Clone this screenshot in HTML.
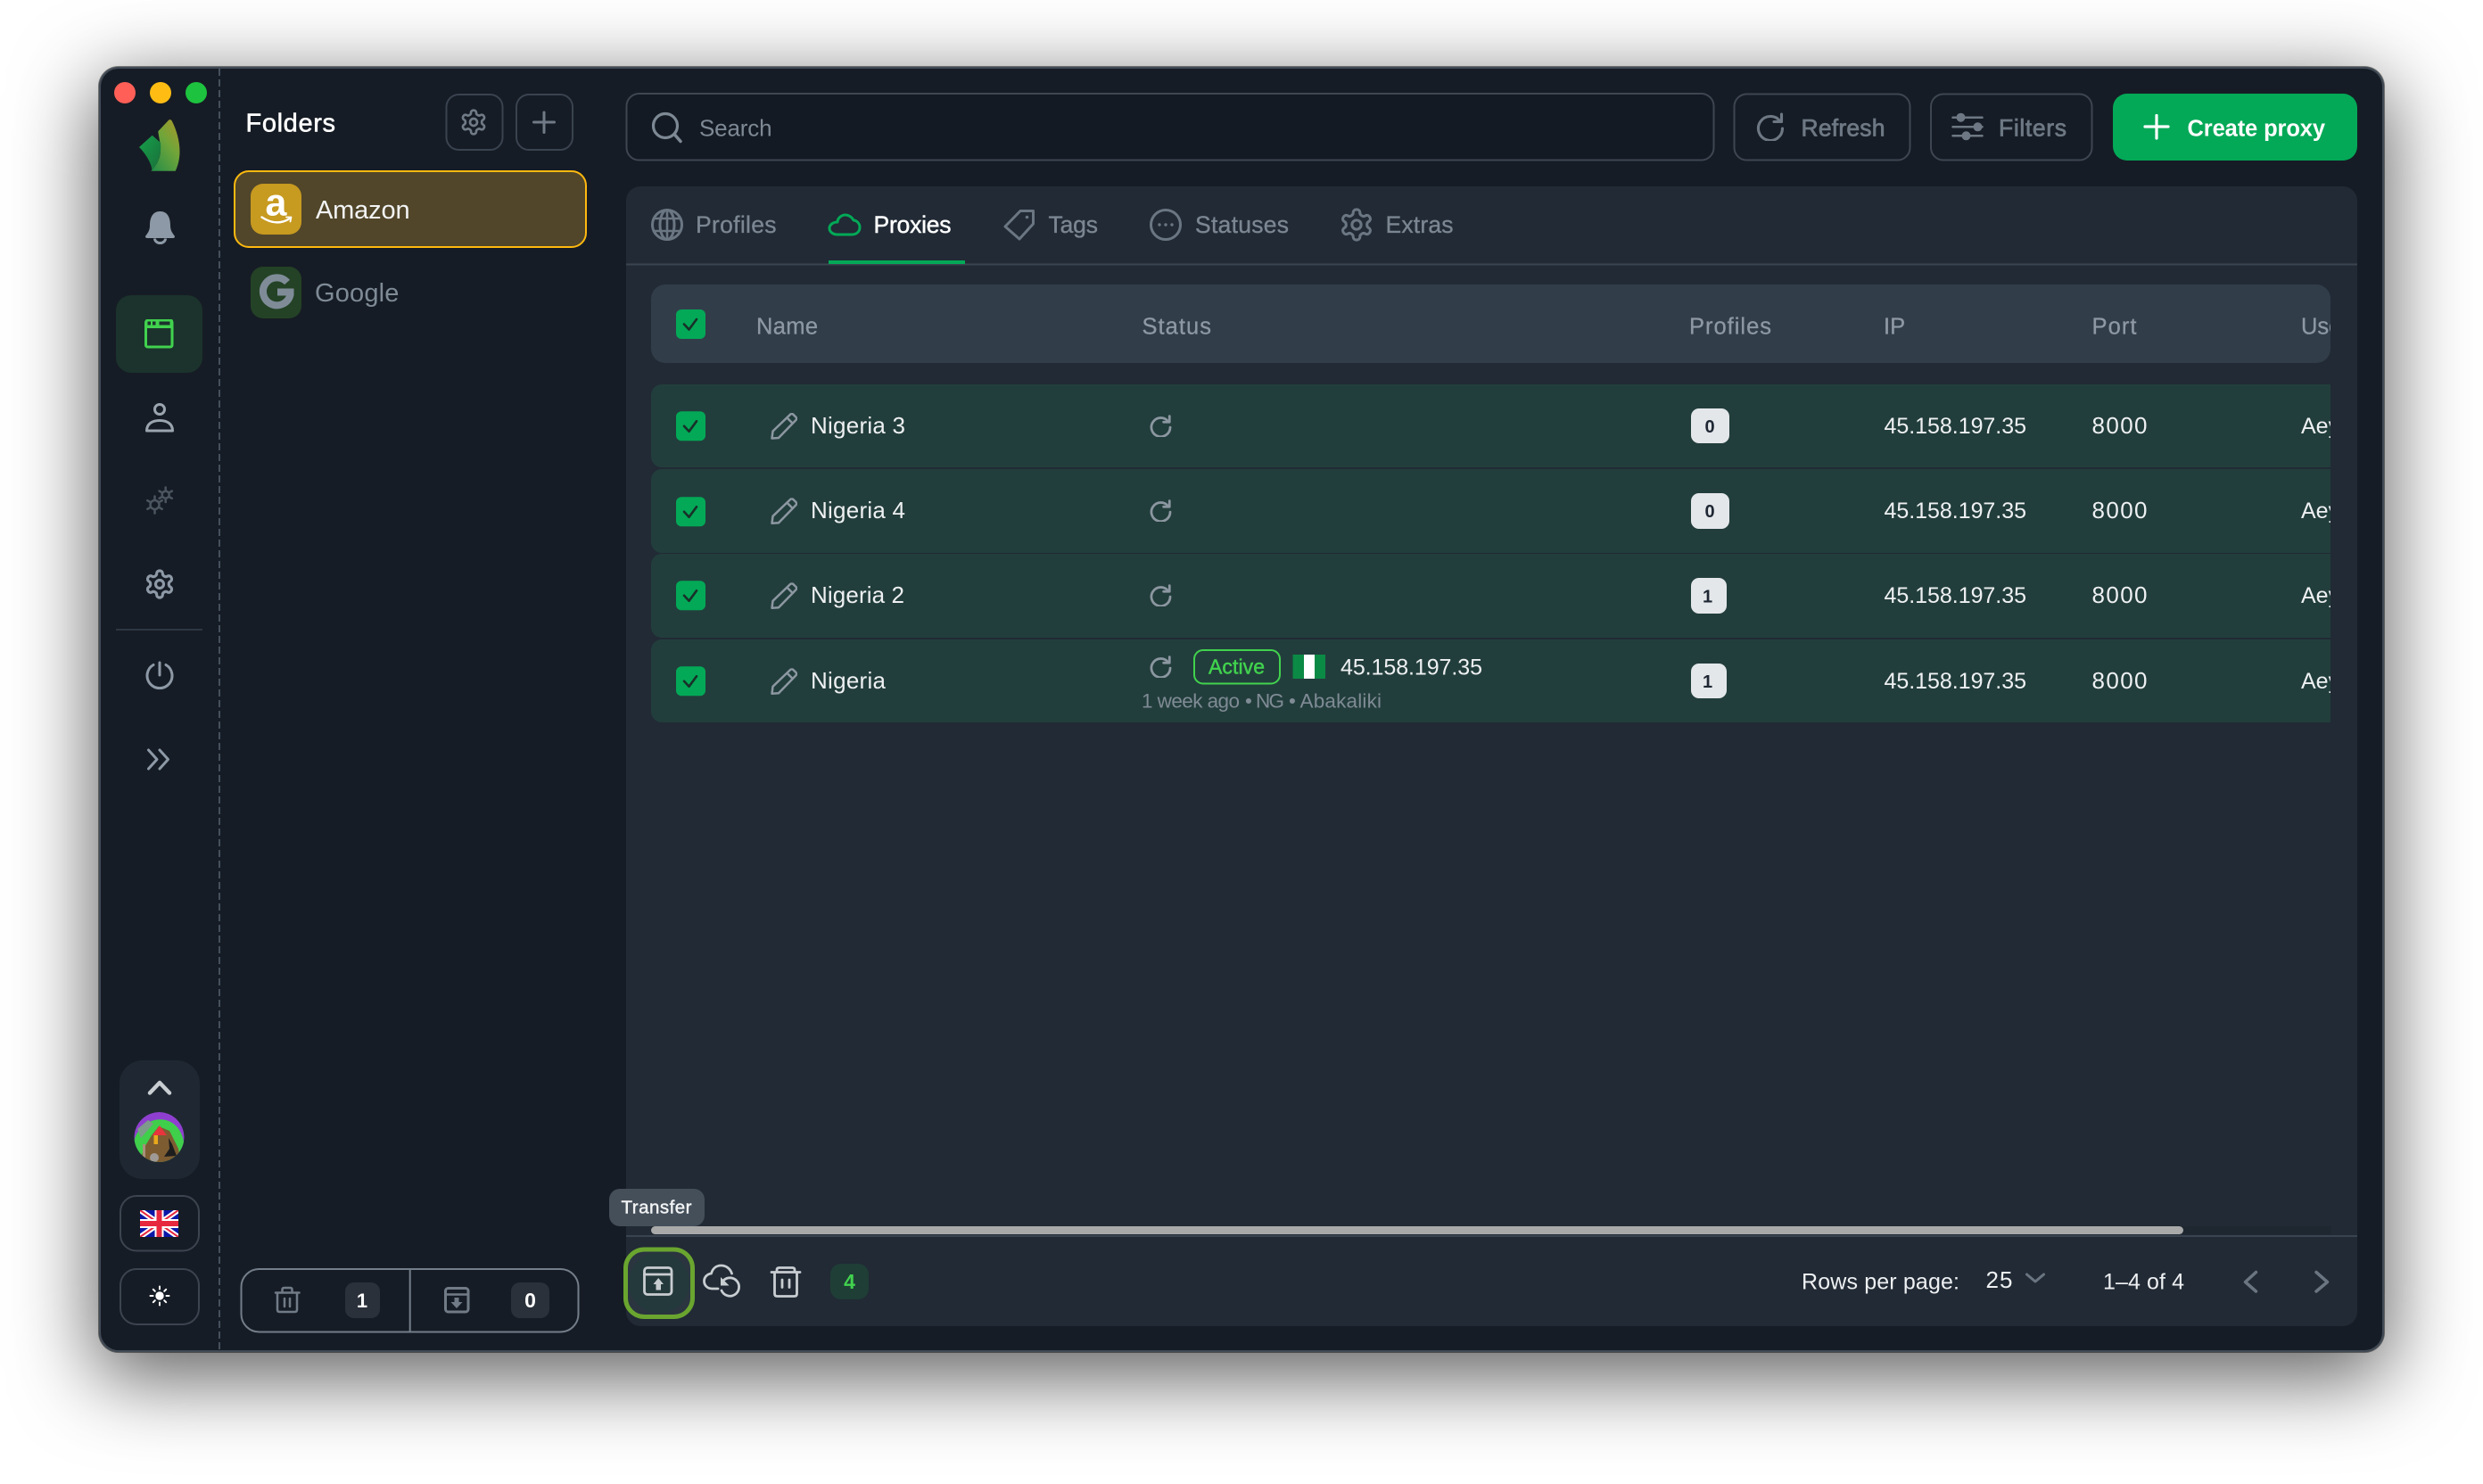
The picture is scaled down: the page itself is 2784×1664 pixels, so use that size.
<!DOCTYPE html>
<html lang="en">
<head>
<meta charset="utf-8">
<title>Proxies</title>
<style>
html,body{margin:0;padding:0;background:#fff;width:2784px;height:1664px;overflow:hidden}
#win{position:absolute;left:111px;top:75px;width:2562px;height:1441px;border-radius:22px;background:#161c25;box-shadow:inset 0 0 0 2px #414b56,0 0 0 1px rgba(0,0,0,.45),0 24px 90px 6px rgba(0,0,0,.62)}
svg{position:absolute;left:0;top:0}
text{font-family:"Liberation Sans",sans-serif;white-space:pre}
.w{fill:#eef0f2}
.m{stroke-width:.45;stroke:currentColor}
.h{fill:#8d98a4;stroke:#8d98a4;stroke-width:.3}
.tab{fill:#7b8692;stroke:#7b8692;stroke-width:.35}
.ic{fill:none;stroke-linecap:round;stroke-linejoin:round}
</style>
</head>
<body>
<div id="win"></div>
<svg width="2784" height="1664" viewBox="0 0 2784 1664" xmlns="http://www.w3.org/2000/svg">
<defs>
<symbol id="gear" viewBox="0 0 24 24"><path d="M12.22 2h-.44a2 2 0 0 0-2 2v.18a2 2 0 0 1-1 1.73l-.43.25a2 2 0 0 1-2 0l-.15-.08a2 2 0 0 0-2.73.73l-.22.38a2 2 0 0 0 .73 2.73l.15.1a2 2 0 0 1 1 1.72v.51a2 2 0 0 1-1 1.74l-.15.09a2 2 0 0 0-.73 2.73l.22.38a2 2 0 0 0 2.73.73l.15-.08a2 2 0 0 1 2 0l.43.25a2 2 0 0 1 1 1.73V20a2 2 0 0 0 2 2h.44a2 2 0 0 0 2-2v-.18a2 2 0 0 1 1-1.73l.43-.25a2 2 0 0 1 2 0l.15.08a2 2 0 0 0 2.73-.73l.22-.39a2 2 0 0 0-.73-2.73l-.15-.08a2 2 0 0 1-1-1.74v-.5a2 2 0 0 1 1-1.74l.15-.09a2 2 0 0 0 .73-2.73l-.22-.38a2 2 0 0 0-2.73-.73l-.15.08a2 2 0 0 1-2 0l-.43-.25a2 2 0 0 1-1-1.73V4a2 2 0 0 0-2-2z"/><circle cx="12" cy="12" r="3"/></symbol>
<symbol id="rf" viewBox="0 0 32 32"><path d="M26.5 9.5A13.5 13.5 0 1 0 29.500 18"/><path d="M28.500 2V10.500H20"/></symbol>
<symbol id="pen" viewBox="0 0 30 30"><path d="M1.500 28.500l1-8L22 1.800a2.500 2.500 0 0 1 3.500 0l2.800 2.800a2.500 2.500 0 0 1 0 3.500L9 28z"/><path d="M18.500 5.500l6 6"/></symbol>
<linearGradient id="lg1" x1="0.9" y1="0" x2="0.15" y2="1"><stop offset="0" stop-color="#a5982a"/><stop offset=".45" stop-color="#6fa53a"/><stop offset="1" stop-color="#2a8f47"/></linearGradient>
<linearGradient id="lg2" x1="0" y1="0" x2="1" y2="1"><stop offset="0" stop-color="#15a04a"/><stop offset="1" stop-color="#1a6f3a"/></linearGradient>
<clipPath id="tb"><rect x="702" y="300" width="1911" height="520"/></clipPath>
<clipPath id="av"><circle cx="178.500" cy="1275" r="28"/></clipPath>
<clipPath id="ukc"><rect x="157" y="1357" width="43" height="30"/></clipPath>
</defs>

<!-- window controls -->
<circle cx="140" cy="104" r="12" fill="#ff5f57"/>
<circle cx="180" cy="104" r="12" fill="#ffbd14"/>
<circle cx="220" cy="104" r="12" fill="#1dc23f"/>
<line x1="246" y1="77" x2="246" y2="1514" stroke="#44505c" stroke-width="2" stroke-dasharray="8 4"/>

<!-- logo -->
<path d="M177.300 147.300L189.300 134.500Q191.500 133.500 192.700 135.500C198 146 201.500 158 201.500 170C201.500 178 199.500 186 196.700 191.700H169.300C175 186 180 178 180 168C180 160 178 154 177.300 147.300Z" fill="url(#lg1)"/>
<path d="M156 165L170.700 151.700L180 160C181 170 179 182 170.500 191C170 183 163 172 156 165Z" fill="url(#lg2)"/>

<!-- sidebar -->
<path d="M179.500 237C170 237 168 246 168 253C168 259 165 262 163 265Q163 267 165 267H194Q196 267 196 265C194 262 191 259 191 253C191 246 189 237 179.500 237Z" fill="#8d99a6"/>
<path d="M173.500 267.500a6 5 0 0 0 12 0" fill="none" stroke="#8d99a6" stroke-width="3"/>

<rect x="130" y="331" width="97" height="87" rx="17" fill="#1b332c"/>
<rect x="163.500" y="359.500" width="29.500" height="29.500" rx="2" fill="none" stroke="#41d24e" stroke-width="3"/>
<rect x="163" y="358" width="31" height="10" rx="2" fill="#41d24e"/>
<rect x="165.500" y="360.500" width="3.500" height="4" fill="#1b332c"/><rect x="171" y="360.500" width="3.500" height="4" fill="#1b332c"/><rect x="178.500" y="360.500" width="12" height="4" fill="#1b332c"/>

<g class="ic" stroke="#9aa5b0" stroke-width="3">
<circle cx="179" cy="459" r="5.500"/>
<path d="M164.500 483C164.500 475 171 471.500 179 471.500C187 471.500 193.500 475 193.500 483Z"/>
</g>
<g fill="none" stroke="#4b5560" stroke-linecap="round">
<circle cx="185.700" cy="554.700" r="4" stroke-width="2.500"/>
<path d="M185.700 546.500v2.500M185.700 560.500v2.500M178.600 550.600l2.200 1.200M190.600 557.600l2.200 1.200M178.600 558.800l2.200-1.200M190.600 551.800l2.200-1.200" stroke-width="2.500"/>
<circle cx="173.500" cy="566" r="5" stroke-width="2.500"/>
<path d="M173.500 556.500v3M173.500 572.500v3M165.300 561.200l2.600 1.500M179.100 569.300l2.600 1.500M165.300 570.800l2.600-1.500M179.100 562.700l2.600-1.500" stroke-width="2.500"/>
</g>
<g fill="none" stroke="#8d99a6" stroke-width="2.100" stroke-linejoin="round"><use href="#gear" x="161" y="637" width="36" height="36"/></g>
<rect x="130" y="705" width="97" height="2" fill="#2d3743"/>
<g class="ic" stroke="#8d99a6" stroke-width="3">
<path d="M172 745.500A14 14 0 1 0 186 745.500"/><path d="M179 743V757"/>
<path d="M166.500 841L176 851.500L166.500 862M179 841L188.500 851.500L179 862"/>
</g>

<rect x="134" y="1189" width="90" height="133" rx="26" fill="#1f2832"/>
<path class="ic" d="M168 1225.500L179 1214L190 1225.500" stroke="#c9ced3" stroke-width="4.500"/>
<g clip-path="url(#av)">
<circle cx="178.500" cy="1275" r="28" fill="#8f3fd0"/>
<path d="M150 1282C152 1264 170 1252 186 1256C198 1259 206 1270 207 1288L195 1304H160Z" fill="#3fcf4b"/>
<path d="M154 1266L166 1256L172 1260L158 1276Z" fill="#7d9a8a"/>
<path d="M157 1304L161 1288L170 1273L178 1263L190 1268L200 1288L203 1304Z" fill="#7d5c32"/>
<path d="M179 1262L187 1273H171Z" fill="#e8343c"/>
<rect x="172.500" y="1273" width="4.500" height="10" fill="#e9a91c"/>
<path d="M189 1276L193 1283L198 1296L184 1297L190 1288Z" fill="#1d1d1d"/>
<circle cx="173" cy="1298" r="5" fill="#a09a96"/>
<rect x="160" y="1283" width="3" height="15" fill="#a8917a"/>
</g>

<rect x="135" y="1341" width="88" height="61.500" rx="18" fill="none" stroke="#3c4450" stroke-width="2"/>
<g clip-path="url(#ukc)">
<rect x="157" y="1357" width="43" height="30" fill="#0a17a7"/>
<path d="M157 1357L200 1387M200 1357L157 1387" stroke="#fff" stroke-width="6"/>
<path d="M157 1357L200 1387M200 1357L157 1387" stroke="#e6273e" stroke-width="2"/>
<path d="M178.500 1357V1387M157 1372H200" stroke="#fff" stroke-width="10"/>
<path d="M178.500 1357V1387M157 1372H200" stroke="#e6273e" stroke-width="6"/>
</g>
<rect x="135" y="1423" width="88" height="62" rx="18" fill="none" stroke="#3c4450" stroke-width="2"/>
<circle cx="179" cy="1453" r="4.700" fill="#fff"/>
<path d="M179 1442.500v3M179 1460.500v3M168.500 1453h3M186.500 1453h3M171.800 1445.800l2 2M184.200 1458.200l2 2M186.200 1445.800l-2 2M173.800 1458.200l-2 2" stroke="#fff" stroke-width="2" stroke-linecap="round"/>

<!-- folders -->
<text x="275.500" y="147.500" font-size="29" fill="#fff" stroke="#fff" stroke-width=".55" textLength="100.500">Folders</text>
<rect x="500.500" y="106" width="63" height="62" rx="14" fill="none" stroke="#3a4350" stroke-width="2"/>
<g fill="none" stroke="#707b87" stroke-width="2" stroke-linejoin="round"><use href="#gear" x="515" y="121" width="32" height="32"/></g>
<rect x="579" y="106" width="63" height="62" rx="14" fill="none" stroke="#3a4350" stroke-width="2"/>
<path class="ic" d="M610 126V148.500M598.500 137H621.500" stroke="#707b87" stroke-width="3"/>

<rect x="263" y="192" width="394" height="85" rx="16" fill="#51462a" stroke="#ffb90f" stroke-width="2"/>
<rect x="281" y="206" width="57" height="57" rx="14" fill="#c79a20"/>
<text x="297.500" y="241.500" font-size="43" font-weight="700" fill="#fff">a</text>
<path class="ic" d="M293.500 243.500Q310 254.500 325 245" stroke="#fff" stroke-width="2.400"/>
<path class="ic" d="M321 243.500L326.500 243.500L325.500 248.500" stroke="#fff" stroke-width="1.800"/>
<text x="354" y="245" font-size="29" fill="#f2f3f4" textLength="105.600">Amazon</text>

<rect x="281" y="299" width="57" height="58" rx="14" fill="#244226"/>
<path d="M322 316.500A15.500 15.500 0 1 0 325.500 330.500V327.500H311" fill="none" stroke="#7f8c98" stroke-width="8"/>
<text x="353" y="338" font-size="29" fill="#7e8b97" textLength="94.400">Google</text>

<!-- bottom counters -->
<rect x="270.500" y="1423" width="378" height="70.500" rx="20" fill="none" stroke="#737e8a" stroke-width="2"/>
<rect x="458.700" y="1423" width="2" height="70.500" fill="#737e8a"/>
<g class="ic" stroke="#707b87" stroke-width="2.500">
<path d="M311 1450V1468.500Q311 1471 313.500 1471H330.500Q333 1471 333 1468.500V1450M309 1449.500H335.500M316.500 1449V1446Q316.500 1444 318.500 1444H325.500Q327.500 1444 327.500 1446V1449M319 1456V1465M325 1456V1465"/>
<rect x="499.500" y="1444.500" width="25.500" height="26.500" rx="3" stroke-width="3"/>
<path d="M499.500 1451.500H525" stroke-width="2.500"/>
</g>
<path d="M509.500 1455h5v5h4l-6.500 7l-6.500-7h4z" fill="#707b87"/>
<rect x="387" y="1438" width="39" height="40" rx="10" fill="#2b313b"/>
<text x="406" y="1466" font-size="22" font-weight="700" fill="#fff" text-anchor="middle">1</text>
<rect x="573" y="1438" width="43" height="40" rx="10" fill="#2b313b"/>
<text x="594.500" y="1466" font-size="23" font-weight="700" fill="#fff" text-anchor="middle">0</text>

<!-- toolbar -->
<rect x="702.500" y="105" width="1219" height="74.500" rx="14" fill="#141a23" stroke="#3e4652" stroke-width="2"/>
<circle cx="746" cy="141" r="13.500" fill="none" stroke="#7d8995" stroke-width="3.200"/>
<path d="M756.500 151L763 158.500" stroke="#7d8995" stroke-width="3.500" stroke-linecap="round"/>
<text x="784" y="152.500" font-size="26" fill="#7d8995" textLength="81.600">Search</text>

<rect x="1944.500" y="105.500" width="197" height="74" rx="14" fill="none" stroke="#3e4652" stroke-width="2"/>
<g class="ic" stroke="#6d7884" stroke-width="3.100"><use href="#rf" x="1969" y="126" width="32" height="32"/></g>
<text x="2019.500" y="152.500" font-size="26.500" fill="#6d7884" stroke="#6d7884" stroke-width=".75" textLength="94">Refresh</text>

<rect x="2165" y="105.500" width="180.500" height="74" rx="14" fill="none" stroke="#3e4652" stroke-width="2"/>
<path d="M2189.500 131.700H2222.500M2189.500 142.300H2222.500M2189.500 152.300H2222.500" stroke="#6d7884" stroke-width="2.500" stroke-linecap="round"/>
<circle cx="2198.500" cy="131.700" r="5" fill="#6d7884"/><circle cx="2217.500" cy="142.300" r="5" fill="#6d7884"/><circle cx="2204.500" cy="152.300" r="5" fill="#6d7884"/>
<text x="2241" y="152.500" font-size="26.500" fill="#6d7884" stroke="#6d7884" stroke-width=".75" textLength="76">Filters</text>

<rect x="2369" y="105" width="274" height="75" rx="16" fill="#03a957"/>
<path d="M2418 129.500V155M2405 142H2431" stroke="#fff" stroke-width="3.200" stroke-linecap="round"/>
<text x="2452.500" y="152.500" font-size="25.500" font-weight="700" fill="#fff" textLength="154.500">Create proxy</text>

<!-- main panel -->
<path d="M702 225a16 16 0 0 1 16-16H2627a16 16 0 0 1 16 16V1471a16 16 0 0 1-16 16H718a16 16 0 0 1-16-16Z" fill="#212a35"/>

<!-- tabs -->
<rect x="702" y="295.500" width="1941" height="2" fill="#3a4450"/>
<rect x="929" y="292" width="153" height="4" fill="#03a957"/>
<g fill="none" stroke="#6b7683" stroke-width="3">
<circle cx="748" cy="252" r="16.500"/>
<ellipse cx="748" cy="252" rx="8" ry="16.500"/>
<path d="M748 235.500V268.500M733 245H763M733 259H763" stroke-width="2.600"/>
</g>
<text x="780" y="261" font-size="26.500" class="tab" textLength="90.500">Profiles</text>
<path class="ic" d="M939 263H955C961 263 964 259 964 255C964 250 960 247 957 247C955 243 951 241 948 241C943 241 939 245 939 249C934 249 930 252 930 256C930 260 934 263 939 263Z" stroke="#03a957" stroke-width="3"/>
<text x="979.500" y="261" font-size="26.500" fill="#fff" textLength="87" stroke="#fff" stroke-width=".45">Proxies</text>
<path class="ic" d="M1144 236.500H1158.500V251L1143 268L1127 254Z" stroke="#6b7683" stroke-width="3"/>
<circle cx="1151.500" cy="243.500" r="1.800" fill="#6b7683"/>
<text x="1175.500" y="261" font-size="26.500" class="tab" textLength="55.500">Tags</text>
<circle cx="1307" cy="252" r="16.500" fill="none" stroke="#6b7683" stroke-width="3"/>
<circle cx="1300" cy="252" r="1.700" fill="#6b7683"/><circle cx="1307" cy="252" r="1.700" fill="#6b7683"/><circle cx="1314" cy="252" r="1.700" fill="#6b7683"/>
<text x="1340" y="261" font-size="26.500" class="tab" textLength="105">Statuses</text>
<g fill="none" stroke="#6b7683" stroke-width="1.800" stroke-linejoin="round"><use href="#gear" x="1500.500" y="231.500" width="41" height="41"/></g>
<text x="1553.500" y="261" font-size="26.500" class="tab" textLength="76">Extras</text>

<!-- table -->
<rect x="730" y="319" width="1883" height="88" rx="16" fill="#323d4a"/>
<rect x="758" y="347" width="33" height="33" rx="6" fill="#03a957"/>
<path class="ic" d="M767 363.500L772.500 369.500L781 358" stroke="#183029" stroke-width="2.600"/>
<text x="848" y="374.500" font-size="25.500" class="h" textLength="69">Name</text>
<text x="1280.500" y="374.500" font-size="25.500" class="h" textLength="77.500">Status</text>
<text x="1894" y="374.500" font-size="25.500" class="h" textLength="92">Profiles</text>
<text x="2112" y="374.500" font-size="25.500" class="h">IP</text>
<text x="2345.500" y="374.500" font-size="25.500" class="h" textLength="50">Port</text>
<g clip-path="url(#tb)">
<text x="2580" y="374.500" font-size="25.500" class="h">User</text>
<rect x="730" y="431" width="1950" height="93" rx="12" fill="#223e3c"/>
<rect x="730" y="526" width="1950" height="94" rx="12" fill="#223e3c"/>
<rect x="730" y="621" width="1950" height="94" rx="12" fill="#223e3c"/>
<rect x="730" y="717" width="1950" height="93" rx="12" fill="#223e3c"/>

<!-- row 1 -->
<rect x="758" y="461.300" width="33" height="33" rx="6" fill="#03a957"/>
<path class="ic" d="M767 477.800L772.500 483.800L781 472.300" stroke="#183029" stroke-width="2.600"/>
<g fill="none" stroke="#8c97a1" stroke-width="2.500" stroke-linejoin="round"><use href="#pen" x="864" y="463" width="30" height="30"/></g>
<text x="909" y="486" font-size="26" class="w" textLength="106">Nigeria 3</text>
<g class="ic" stroke="#8c97a1" stroke-width="3.500"><use href="#rf" x="1289" y="465" width="25" height="25"/></g>
<rect x="1896" y="458" width="43" height="39" rx="9" fill="#e4e7ea"/>
<text x="1917" y="485" font-size="20" font-weight="700" fill="#1e2733" text-anchor="middle">0</text>
<text x="2112.500" y="486" font-size="25" class="w" textLength="159.500">45.158.197.35</text>
<text x="2345.500" y="486" font-size="26" class="w" textLength="62">8000</text>
<text x="2580" y="486" font-size="25" class="w">Aeyxk</text>

<!-- row 2 -->
<rect x="758" y="557.300" width="33" height="33" rx="6" fill="#03a957"/>
<path class="ic" d="M767 573.800L772.500 579.800L781 568.300" stroke="#183029" stroke-width="2.600"/>
<g fill="none" stroke="#8c97a1" stroke-width="2.500" stroke-linejoin="round"><use href="#pen" x="864" y="558.300" width="30" height="30"/></g>
<text x="909" y="581" font-size="26" class="w" textLength="106">Nigeria 4</text>
<g class="ic" stroke="#8c97a1" stroke-width="3.500"><use href="#rf" x="1289" y="560" width="25" height="25"/></g>
<rect x="1896" y="553" width="43" height="40" rx="9" fill="#e4e7ea"/>
<text x="1917" y="580" font-size="20" font-weight="700" fill="#1e2733" text-anchor="middle">0</text>
<text x="2112.500" y="581" font-size="25" class="w" textLength="159.500">45.158.197.35</text>
<text x="2345.500" y="581" font-size="26" class="w" textLength="62">8000</text>
<text x="2580" y="581" font-size="25" class="w">Aeyxk</text>

<!-- row 3 -->
<rect x="758" y="651.300" width="33" height="33" rx="6" fill="#03a957"/>
<path class="ic" d="M767 667.800L772.500 673.800L781 662.300" stroke="#183029" stroke-width="2.600"/>
<g fill="none" stroke="#8c97a1" stroke-width="2.500" stroke-linejoin="round"><use href="#pen" x="864" y="653.300" width="30" height="30"/></g>
<text x="909" y="676" font-size="26" class="w" textLength="105">Nigeria 2</text>
<g class="ic" stroke="#8c97a1" stroke-width="3.500"><use href="#rf" x="1289" y="655" width="25" height="25"/></g>
<rect x="1896" y="648" width="40" height="40" rx="9" fill="#e4e7ea"/>
<text x="1914.500" y="675.500" font-size="20" font-weight="700" fill="#1e2733" text-anchor="middle">1</text>
<text x="2112.500" y="676" font-size="25" class="w" textLength="159.500">45.158.197.35</text>
<text x="2345.500" y="676" font-size="26" class="w" textLength="62">8000</text>
<text x="2580" y="676" font-size="25" class="w">Aeyxk</text>

<!-- row 4 -->
<rect x="758" y="747.300" width="33" height="33" rx="6" fill="#03a957"/>
<path class="ic" d="M767 763.800L772.500 769.800L781 758.300" stroke="#183029" stroke-width="2.600"/>
<g fill="none" stroke="#8c97a1" stroke-width="2.500" stroke-linejoin="round"><use href="#pen" x="864" y="749.300" width="30" height="30"/></g>
<text x="909" y="772" font-size="26" class="w" textLength="84">Nigeria</text>
<g class="ic" stroke="#8c97a1" stroke-width="3.500"><use href="#rf" x="1289" y="735" width="25" height="25"/></g>
<rect x="1339" y="729" width="96" height="37.500" rx="10" fill="none" stroke="#41d24e" stroke-width="2"/>
<text x="1355" y="755.500" font-size="23" fill="#41d24e" textLength="63" stroke="#41d24e" stroke-width=".45">Active</text>
<rect x="1449.500" y="734" width="36.500" height="27" fill="#fff"/>
<rect x="1449.500" y="734" width="12.500" height="27" fill="#0b8a45"/><rect x="1474" y="734" width="12" height="27" fill="#0b8a45"/>
<text x="1503" y="756.500" font-size="25" class="w" textLength="159">45.158.197.35</text>
<text x="1280" y="793.500" font-size="22.500" fill="#7f8b95" textLength="110">1 week ago</text>
<text x="1396" y="793.500" font-size="22.500" fill="#7f8b95">•</text>
<text x="1408" y="793.500" font-size="22.500" fill="#7f8b95" textLength="32">NG</text>
<text x="1445" y="793.500" font-size="22.500" fill="#7f8b95">•</text>
<text x="1457.500" y="793.500" font-size="22.500" fill="#7f8b95" textLength="91.500">Abakaliki</text>
<rect x="1896" y="744" width="40" height="39" rx="9" fill="#e4e7ea"/>
<text x="1914.500" y="771" font-size="20" font-weight="700" fill="#1e2733" text-anchor="middle">1</text>
<text x="2112.500" y="772" font-size="25" class="w" textLength="159.500">45.158.197.35</text>
<text x="2345.500" y="772" font-size="26" class="w" textLength="62">8000</text>
<text x="2580" y="772" font-size="25" class="w">Aeyxk</text>
</g>

<!-- scrollbar -->
<rect x="730" y="1375" width="1883.500" height="9" fill="#1e2730"/>
<rect x="730" y="1375" width="1718" height="9" rx="4.500" fill="#a9a9a9"/>
<rect x="702" y="1385" width="1941" height="2" fill="#3a4450"/>

<!-- tooltip -->
<rect x="683" y="1333" width="107" height="42" rx="12" fill="#444f5a"/>
<text x="696.500" y="1360.500" font-size="20.500" fill="#f2f3f4" textLength="79" stroke="#f2f3f4" stroke-width=".45">Transfer</text>

<!-- footer actions -->
<rect x="701.500" y="1401" width="75" height="75.500" rx="21" fill="#2a3540" stroke="#6aa52f" stroke-width="5"/>
<circle cx="739" cy="1438.500" r="34" fill="#24393b"/>
<g class="ic" stroke="#c8cdd1" stroke-width="2.800">
<rect x="722.500" y="1421.500" width="30.500" height="30" rx="3.500"/>
<path d="M722.500 1429H753"/>
<path d="M805 1445H798.500C793 1445 789.500 1441 789.500 1436.500C789.500 1432 793 1428.500 797.500 1428C799 1422.500 803 1419 808.500 1419C814.500 1419 819 1423 820.500 1428"/>
<path d="M811 1436A10.200 10.200 0 1 1 809 1447"/>
<path d="M865 1426.500H897M871 1426V1424Q871 1421.500 873.500 1421.500H888.500Q891 1421.500 891 1424V1426M868.500 1427V1450.500Q868.500 1453.500 871.500 1453.500H890.500Q893.500 1453.500 893.500 1450.500V1427M877 1435V1443.500M885 1435V1443.500"/>
</g>
<path d="M808 1432V1441.500H817.500Z" fill="#c8cdd1"/>
<path d="M732.500 1440L738.200 1433L744 1440H741V1446.500H735.500V1440Z" fill="#c8cdd1"/>
<rect x="931" y="1417" width="43" height="40" rx="12" fill="#1f3e36"/>
<text x="952.500" y="1445" font-size="23" font-weight="700" fill="#41d24e" text-anchor="middle">4</text>

<!-- pagination -->
<text x="2020" y="1445.500" font-size="25" class="w" textLength="177">Rows per page:</text>
<text x="2226.500" y="1444" font-size="26" class="w" textLength="30">25</text>
<path class="ic" d="M2272.500 1429L2282 1437L2291.500 1429" stroke="#6a7581" stroke-width="3"/>
<text x="2358" y="1445.500" font-size="25" class="w" textLength="91">1–4 of 4</text>
<path class="ic" d="M2529.500 1426.500L2517.500 1437.500L2529.500 1448" stroke="#6a7581" stroke-width="3.500"/>
<path class="ic" d="M2597 1426.500L2609.500 1437.500L2597 1448" stroke="#6a7581" stroke-width="3.500"/>
</svg>
</body>
</html>
